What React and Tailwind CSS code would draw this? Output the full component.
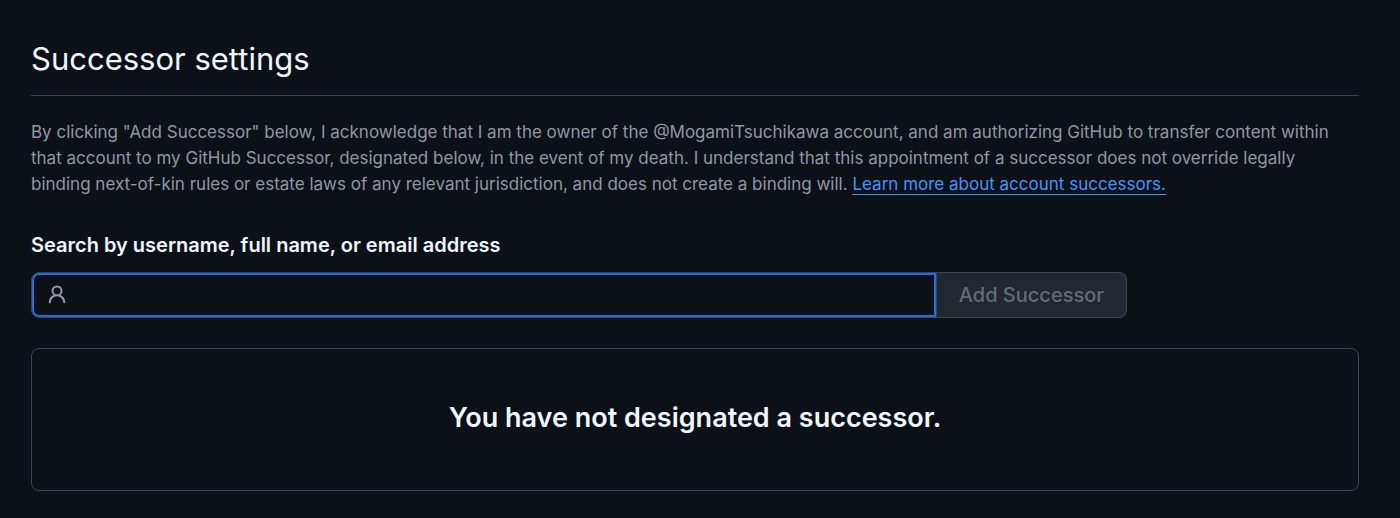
import React, { useState } from "react";

const PersonIcon = () => (
  <svg
    viewBox="0 0 16 16"
    width="22"
    height="22"
    fill="currentColor"
    aria-hidden="true"
    className="shrink-0 text-[#9198a1]"
  >
    <path d="M10.561 8.073a6.005 6.005 0 0 1 3.432 5.142.75.75 0 1 1-1.498.07 4.5 4.5 0 0 0-8.99 0 .75.75 0 0 1-1.498-.07 6.004 6.004 0 0 1 3.431-5.142 3.999 3.999 0 1 1 5.123 0ZM10.5 5a2.5 2.5 0 1 0-5 0 2.5 2.5 0 0 0 5 0Z" />
  </svg>
);

export default function SuccessorSettings() {
  const [query, setQuery] = useState("");

  const handleSubmit = (e) => {
    e.preventDefault();
  };

  return (
    <main className="min-h-screen bg-[#0c1118] pt-[35px] pb-7 pl-[31px] pr-[41px] font-['Inter',sans-serif] text-[#f0f6fc]">
      <h2 className="border-b border-[#3d444d] pb-[13px] text-[31px] leading-[47px]">
        Successor settings
      </h2>

      <p className="mt-[23px] text-[17px] leading-[26px] text-[#9198a1]">
        By clicking "Add Successor" below, I acknowledge that I am the owner of the @MogamiTsuchikawa account, and am authorizing GitHub to transfer content within that account to my GitHub Successor, designated below, in the event of my death. I understand that this appointment of a successor does not override legally binding next-of-kin rules or estate laws of any relevant jurisdiction, and does not create a binding will.{" "}
        <a href="#" className="text-[#4493f8] underline underline-offset-4">
          Learn more about account successors.
        </a>
      </p>

      {/* Search */}
      <form onSubmit={handleSubmit} className="mt-8">
        <label htmlFor="successor" className="block text-xl leading-8 font-semibold">
          Search by username, full name, or email address
        </label>
        <div className="mt-[11px] flex h-[46px] max-w-[1096px]">
          <div className="flex flex-1 items-center rounded-l-lg border border-[#3d444d] px-3.5 inset-ring-2 inset-ring-[#1f6feb]">
            <PersonIcon />
            <input
              id="successor"
              type="text"
              value={query}
              onChange={(e) => setQuery(e.target.value)}
              className="ml-2 h-full flex-1 bg-transparent text-xl outline-none"
            />
          </div>
          <button
            type="submit"
            disabled={!query}
            className="rounded-r-lg border border-l-0 border-[#3d444d] bg-[#212830] px-[22px] text-xl font-medium disabled:text-[#656c76]"
          >
            Add Successor
          </button>
        </div>
      </form>

      {/* Empty state */}
      <div className="mt-[30px] rounded-lg border border-[#3d444d] px-8 pt-[46px] pb-[50px] text-center">
        <h3 className="text-[27px] leading-[45px] font-semibold">
          You have not designated a successor.
        </h3>
      </div>
    </main>
  );
}
